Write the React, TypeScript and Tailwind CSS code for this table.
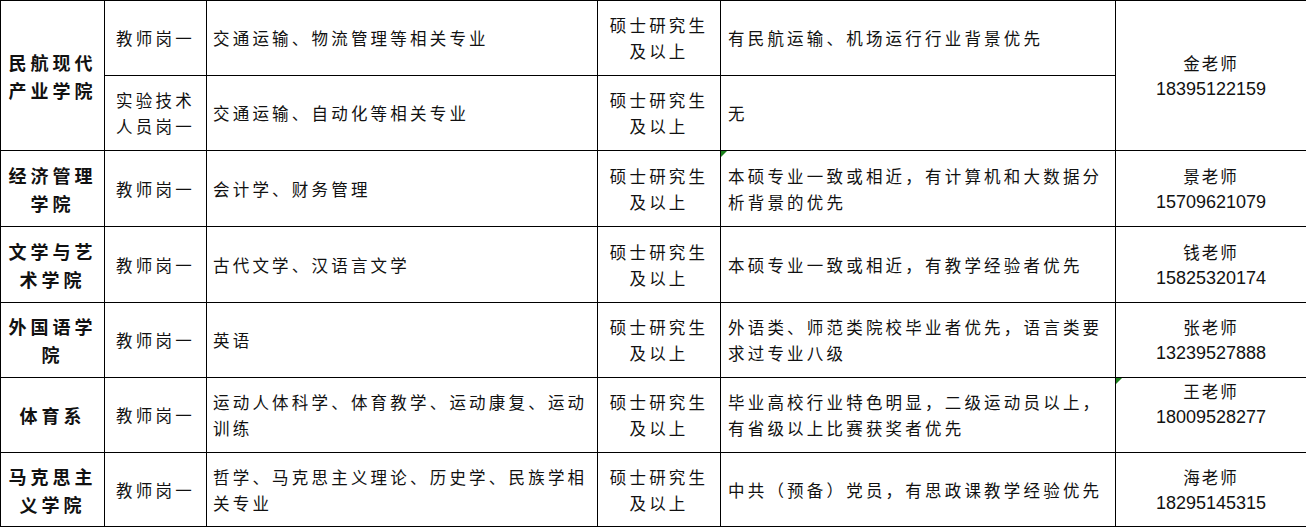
import React from "react";

type Row = {
  college?: string;
  collegeSpan?: number;
  position: string;
  major: string;
  reqs: string;
  reqsMark?: boolean;
  contact?: { name: string; phone: string; span?: number; mark?: boolean; lift?: boolean };
};

const rows: Row[] = [
  {
    college: "民航现代产业学院",
    collegeSpan: 2,
    position: "教师岗一",
    major: "交通运输、物流管理等相关专业",
    reqs: "有民航运输、机场运行行业背景优先",
    contact: { name: "金老师", phone: "18395122159", span: 2 },
  },
  {
    position: "实验技术人员岗一",
    major: "交通运输、自动化等相关专业",
    reqs: "无",
  },
  {
    college: "经济管理学院",
    position: "教师岗一",
    major: "会计学、财务管理",
    reqs: "本硕专业一致或相近，有计算机和大数据分析背景的优先",
    reqsMark: true,
    contact: { name: "景老师", phone: "15709621079" },
  },
  {
    college: "文学与艺术学院",
    position: "教师岗一",
    major: "古代文学、汉语言文学",
    reqs: "本硕专业一致或相近，有教学经验者优先",
    contact: { name: "钱老师", phone: "15825320174" },
  },
  {
    college: "外国语学院",
    position: "教师岗一",
    major: "英语",
    reqs: "外语类、师范类院校毕业者优先，语言类要求过专业八级",
    contact: { name: "张老师", phone: "13239527888" },
  },
  {
    college: "体育系",
    position: "教师岗一",
    major: "运动人体科学、体育教学、运动康复、运动训练",
    reqs: "毕业高校行业特色明显，二级运动员以上，有省级以上比赛获奖者优先",
    contact: { name: "王老师", phone: "18009528277", mark: true, lift: true },
  },
  {
    college: "马克思主义学院",
    position: "教师岗一",
    major: "哲学、马克思主义理论、历史学、民族学相关专业",
    reqs: "中共（预备）党员，有思政课教学经验优先",
    contact: { name: "海老师", phone: "18295145315" },
  },
];

// row heights read off the screenshot
const heights = ["h-[75px]", "h-[75px]", "h-[76px]", "h-[76px]", "h-[75px]", "h-[74px]", "h-[74px]"];

const Mark = () => (
  <span className="absolute left-0 top-0 w-0 h-0 border-t-[6px] border-r-[6px] border-t-[#1a7f1a] border-r-transparent" />
);

const cell = "border border-black align-middle";

export default function App() {
  return (
    <div
      className="w-[1306px] h-[527px] bg-white text-[#111] overflow-hidden"
      style={{ fontFamily: '"Noto Sans CJK SC", "Liberation Sans", sans-serif' }}
    >
      <table className="border-collapse table-fixed w-[1306px] text-[16.5px] leading-[26px] tracking-[3.2px]">
        <colgroup>
          <col className="w-[104px]" />
          <col className="w-[102px]" />
          <col className="w-[391px]" />
          <col className="w-[123px]" />
          <col className="w-[395px]" />
          <col className="w-[191px]" />
        </colgroup>
        <tbody>
          {rows.map((r, i) => (
            <tr key={i} className={heights[i]}>
              {r.college && (
                <td
                  rowSpan={r.collegeSpan ?? 1}
                  className={`${cell} px-[5px] text-center font-bold text-[18px] leading-[28px] tracking-[4px]`}
                >
                  {r.college}
                </td>
              )}
              <td className={`${cell} px-[11px] text-center`}>{r.position}</td>
              <td className={`${cell} pl-[6px] pr-[4px]`}>{r.major}</td>
              <td className={`${cell} px-[9px] text-center`}>硕士研究生及以上</td>
              <td className={`${cell} relative pl-[7px] pr-[4px]`}>
                {r.reqsMark && <Mark />}
                {r.reqs}
              </td>
              {r.contact && (
                <td
                  rowSpan={r.contact.span ?? 1}
                  className={`${cell} relative text-center tracking-[2px] ${r.contact.lift ? "pb-[22px]" : ""}`}
                >
                  {r.contact.mark && <Mark />}
                  <div>{r.contact.name}</div>
                  <div
                    className="text-[18px] tracking-normal"
                    style={{ fontFamily: '"Liberation Sans", sans-serif' }}
                  >
                    {r.contact.phone}
                  </div>
                </td>
              )}
            </tr>
          ))}
        </tbody>
      </table>
    </div>
  );
}
